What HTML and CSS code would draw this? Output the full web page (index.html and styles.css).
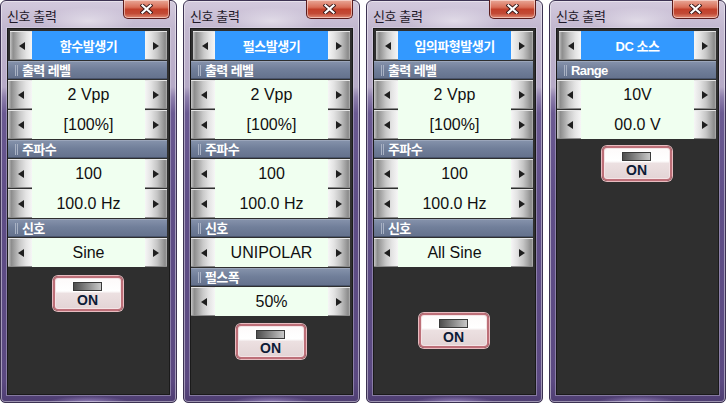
FILE: index.html
```html
<!DOCTYPE html>
<html lang="ko">
<head>
<meta charset="utf-8">
<title>신호 출력</title>
<link rel="stylesheet" href="styles.css">
</head>
<body>
<div class="desk">

  <div class="win">
    <div class="titlebar">
      <span class="title">신호 출력</span>
      <span class="close"><svg width="13" height="10" viewBox="0 0 13 10"><path d="M2.5 1.5 L10.5 8.5 M10.5 1.5 L2.5 8.5" stroke="#3a1a1a" stroke-width="4" stroke-linecap="square"/><path d="M2.5 1.5 L10.5 8.5 M10.5 1.5 L2.5 8.5" stroke="#fff" stroke-width="2.2" stroke-linecap="square"/></svg></span>
    </div>
    <div class="panel">
      <div class="mode"><span class="arr l"><i></i></span><span class="mval">함수발생기</span><span class="arr r"><i></i></span></div>
      <div class="hdr"><i class="grip"></i>출력 레벨</div>
      <div class="group">
        <div class="row"><span class="arr l"><i></i></span><span class="val">2 Vpp</span><span class="arr r"><i></i></span></div>
        <div class="row"><span class="arr l"><i></i></span><span class="val">[100%]</span><span class="arr r"><i></i></span></div>
      </div>
      <div class="hdr"><i class="grip"></i>주파수</div>
      <div class="group">
        <div class="row"><span class="arr l"><i></i></span><span class="val">100</span><span class="arr r"><i></i></span></div>
        <div class="row"><span class="arr l"><i></i></span><span class="val">100.0 Hz</span><span class="arr r"><i></i></span></div>
      </div>
      <div class="hdr"><i class="grip"></i>신호</div>
      <div class="group">
        <div class="row"><span class="arr l"><i></i></span><span class="val">Sine</span><span class="arr r"><i></i></span></div>
      </div>
      <div class="onbtn on-a"><i class="ind"></i><b>ON</b></div>
    </div>
  </div>

  <div class="win">
    <div class="titlebar">
      <span class="title">신호 출력</span>
      <span class="close"><svg width="13" height="10" viewBox="0 0 13 10"><path d="M2.5 1.5 L10.5 8.5 M10.5 1.5 L2.5 8.5" stroke="#3a1a1a" stroke-width="4" stroke-linecap="square"/><path d="M2.5 1.5 L10.5 8.5 M10.5 1.5 L2.5 8.5" stroke="#fff" stroke-width="2.2" stroke-linecap="square"/></svg></span>
    </div>
    <div class="panel">
      <div class="mode"><span class="arr l"><i></i></span><span class="mval">펄스발생기</span><span class="arr r"><i></i></span></div>
      <div class="hdr"><i class="grip"></i>출력 레벨</div>
      <div class="group">
        <div class="row"><span class="arr l"><i></i></span><span class="val">2 Vpp</span><span class="arr r"><i></i></span></div>
        <div class="row"><span class="arr l"><i></i></span><span class="val">[100%]</span><span class="arr r"><i></i></span></div>
      </div>
      <div class="hdr"><i class="grip"></i>주파수</div>
      <div class="group">
        <div class="row"><span class="arr l"><i></i></span><span class="val">100</span><span class="arr r"><i></i></span></div>
        <div class="row"><span class="arr l"><i></i></span><span class="val">100.0 Hz</span><span class="arr r"><i></i></span></div>
      </div>
      <div class="hdr"><i class="grip"></i>신호</div>
      <div class="group">
        <div class="row"><span class="arr l"><i></i></span><span class="val">UNIPOLAR</span><span class="arr r"><i></i></span></div>
      </div>
      <div class="hdr"><i class="grip"></i>펄스폭</div>
      <div class="group">
        <div class="row"><span class="arr l"><i></i></span><span class="val">50%</span><span class="arr r"><i></i></span></div>
      </div>
      <div class="onbtn on-b"><i class="ind"></i><b>ON</b></div>
    </div>
  </div>

  <div class="win">
    <div class="titlebar">
      <span class="title">신호 출력</span>
      <span class="close"><svg width="13" height="10" viewBox="0 0 13 10"><path d="M2.5 1.5 L10.5 8.5 M10.5 1.5 L2.5 8.5" stroke="#3a1a1a" stroke-width="4" stroke-linecap="square"/><path d="M2.5 1.5 L10.5 8.5 M10.5 1.5 L2.5 8.5" stroke="#fff" stroke-width="2.2" stroke-linecap="square"/></svg></span>
    </div>
    <div class="panel">
      <div class="mode"><span class="arr l"><i></i></span><span class="mval">임의파형발생기</span><span class="arr r"><i></i></span></div>
      <div class="hdr"><i class="grip"></i>출력 레벨</div>
      <div class="group">
        <div class="row"><span class="arr l"><i></i></span><span class="val">2 Vpp</span><span class="arr r"><i></i></span></div>
        <div class="row"><span class="arr l"><i></i></span><span class="val">[100%]</span><span class="arr r"><i></i></span></div>
      </div>
      <div class="hdr"><i class="grip"></i>주파수</div>
      <div class="group">
        <div class="row"><span class="arr l"><i></i></span><span class="val">100</span><span class="arr r"><i></i></span></div>
        <div class="row"><span class="arr l"><i></i></span><span class="val">100.0 Hz</span><span class="arr r"><i></i></span></div>
      </div>
      <div class="hdr"><i class="grip"></i>신호</div>
      <div class="group">
        <div class="row"><span class="arr l"><i></i></span><span class="val">All Sine</span><span class="arr r"><i></i></span></div>
      </div>
      <div class="onbtn on-c"><i class="ind"></i><b>ON</b></div>
    </div>
  </div>

  <div class="win">
    <div class="titlebar">
      <span class="title">신호 출력</span>
      <span class="close"><svg width="13" height="10" viewBox="0 0 13 10"><path d="M2.5 1.5 L10.5 8.5 M10.5 1.5 L2.5 8.5" stroke="#3a1a1a" stroke-width="4" stroke-linecap="square"/><path d="M2.5 1.5 L10.5 8.5 M10.5 1.5 L2.5 8.5" stroke="#fff" stroke-width="2.2" stroke-linecap="square"/></svg></span>
    </div>
    <div class="panel">
      <div class="mode"><span class="arr l"><i></i></span><span class="mval">DC 소스</span><span class="arr r"><i></i></span></div>
      <div class="hdr"><i class="grip"></i>Range</div>
      <div class="group">
        <div class="row"><span class="arr l"><i></i></span><span class="val">10V</span><span class="arr r"><i></i></span></div>
        <div class="row"><span class="arr l"><i></i></span><span class="val">00.0 V</span><span class="arr r"><i></i></span></div>
      </div>
      <div class="onbtn on-d"><i class="ind"></i><b>ON</b></div>
    </div>
  </div>

</div>
</body>
</html>
```
FILE: styles.css
```css
html, body {
  margin: 0;
  padding: 0;
  background: #ffffff;
}
body {
  width: 727px;
  height: 403px;
  overflow: hidden;
}
.desk {
  display: flex;
  gap: 6px;
}
.win {
  width: 177px;
  height: 403px;
  box-sizing: border-box;
  display: flex;
  flex-direction: column;
  border: 1px solid #3c3252;
  border-radius: 6px 6px 5px 5px;
  padding: 0 6px 7px 6px;
  background:
    radial-gradient(ellipse 46px 14px at 50% 20px, rgba(255,255,255,0.45), rgba(255,255,255,0)),
    radial-gradient(ellipse 40px 6px at 50% 100%, rgba(200,180,240,0.55), rgba(200,180,240,0)),
    linear-gradient(180deg, #d3cadd 0px, #c2b7cf 28px, #b6aac7 86px, #8e7fac 96px, #6b5a92 112px, #5f4e87 200px, #5b4981 380px, #4d3d70 403px);
  box-shadow: inset 0 0 0 1px rgba(255,255,255,0.45);
}
.titlebar {
  height: 27px;
  display: flex;
  justify-content: space-between;
  align-items: flex-start;
}
.title {
  font-family: "Noto Sans CJK KR", sans-serif;
  font-size: 13px;
  line-height: 15px;
  letter-spacing: -0.4px;
  color: #1e1828;
  padding-top: 7px;
  padding-left: 0px;
}
.close {
  margin-top: -1px;
  margin-right: 0px;
  width: 47px;
  height: 19px;
  box-sizing: border-box;
  display: flex;
  align-items: center;
  justify-content: center;
  border: 1px solid #5a1c1c;
  border-top: none;
  border-radius: 0 0 5px 5px;
  background: linear-gradient(180deg, #e9a898 0%, #d96f58 40%, #c2402a 52%, #c24a36 75%, #e08a74 100%);
  box-shadow: inset 0 0 0 1px rgba(255,235,230,0.55);
}
.panel {
  flex: 1;
  border: 1px solid #1a1a1a;
  background: #2f2f2f;
  padding: 1px 2px 0 0;
  box-shadow: 0 0 0 1px rgba(230,225,240,0.35);
}
.mode {
  display: flex;
  height: 29px;
  margin: 1px 0 0 2px;
}
.mval {
  width: 113px;
  background: #3399ff;
  color: #ffffff;
  font-family: "Liberation Sans", "Noto Sans CJK KR", sans-serif;
  font-weight: bold;
  font-size: 13px;
  letter-spacing: -0.5px;
  display: flex;
  align-items: center;
  justify-content: center;
}
.hdr {
  height: 18px;
  margin: 1px 0 1px 0;
  box-sizing: border-box;
  display: flex;
  align-items: center;
  background: linear-gradient(180deg, #8491aa 0%, #717f9a 45%, #65728d 100%);
  border-top: 1px solid #9ba6bb;
  border-bottom: 1px solid #4a556d;
  color: #ffffff;
  font-family: "Liberation Sans", "Noto Sans CJK KR", sans-serif;
  font-weight: bold;
  font-size: 13px;
  letter-spacing: -0.6px;
  line-height: 15px;
}
.grip {
  width: 3px;
  height: 11px;
  margin: 0 4px 0 7px;
  border-left: 1px solid #a9b2c4;
  border-right: 1px solid #a9b2c4;
  box-sizing: border-box;
}
.group {
  display: flex;
  flex-direction: column;
  gap: 1px;
  margin-bottom: 1px;
  background: linear-gradient(90deg, #2f2f2f 0 24px, #f0fff0 24px 137px, #2f2f2f 137px);
}
.row {
  display: flex;
  height: 29px;
}
.val {
  width: 113px;
  background: #f0fff0;
  color: #101010;
  font-family: "Liberation Sans", sans-serif;
  font-size: 16px;
  display: flex;
  align-items: center;
  justify-content: center;
}
.arr {
  display: flex;
  align-items: center;
  justify-content: center;
  box-sizing: border-box;
  border-top: 1px solid #e6e6e6;
  border-bottom: 1px solid #8a8a8a;
}
.arr.l {
  flex: 1;
  background: linear-gradient(90deg, #c6c6c6 0%, #8d8d8d 14%, #a4a4a4 28%, #c9c9c9 50%, #e4e4e4 75%, #f6f6f6 100%);
}
.arr.r {
  width: 22px;
  background: linear-gradient(90deg, #f6f6f6 0%, #e2e2e2 28%, #c6c6c6 55%, #a2a2a2 78%, #8a8a8a 92%, #b4b4b4 100%);
}
.arr i {
  width: 0;
  height: 0;
  border-top: 4px solid transparent;
  border-bottom: 4px solid transparent;
}
.arr.l i {
  border-right: 6px solid #1e1e1e;
  margin-left: 2px;
}
.arr.r i {
  border-left: 6px solid #1e1e1e;
  margin-right: 1px;
}
.onbtn {
  width: 70px;
  height: 35px;
  box-sizing: border-box;
  margin: 9px auto 0 auto;
  border: 2px solid #bd6f78;
  border-radius: 5px;
  box-shadow: 0 0 0 1px #e7bcc0, inset 0 0 0 1px #f4e4e6;
  background: linear-gradient(180deg, #fdfafa 0%, #ffffff 42%, #ece0e1 50%, #e3d4d5 100%);
  display: flex;
  flex-direction: column;
  align-items: center;
}
.on-a { margin-top: 9px; }
.on-b { margin-top: 8px; }
.on-c { margin-top: 46px; }
.on-d { margin-top: 7px; }
.ind {
  width: 29px;
  height: 9px;
  box-sizing: border-box;
  margin-top: 4px;
  border: 1px solid #3a3a3a;
  background: linear-gradient(90deg, #4e4e4e 0%, #8a8a8a 50%, #c8c8c8 100%);
  box-shadow: 0 0 0 1px #ffffff;
}
.onbtn b {
  font-family: "Liberation Sans", sans-serif;
  font-weight: bold;
  font-size: 14px;
  line-height: 15px;
  color: #0d1b36;
  margin-top: 2px;
}
```
